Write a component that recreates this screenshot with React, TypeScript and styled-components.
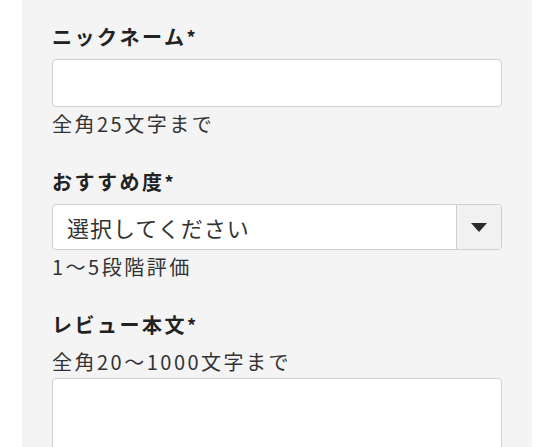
import * as React from 'react'
import styled, { createGlobalStyle } from 'styled-components'

const GlobalStyle = createGlobalStyle`
    html, body {
        margin: 0;
        padding: 0;
        background: #ffffff;
    }
    body {
        font-family: 'Noto Sans CJK JP', 'Noto Sans', sans-serif;
        color: #333333;
    }
`

const App = (): JSX.Element => {
    return (
        <>
            <GlobalStyle />
            <Page>
                <Panel>
                    <Field>
                        <Label>
                            ニックネーム<Required>*</Required>
                        </Label>
                        <TextInput type="text" />
                        <Note>全角25文字まで</Note>
                    </Field>
                    <Field>
                        <Label>
                            おすすめ度<Required>*</Required>
                        </Label>
                        <SelectBox>
                            <SelectValue>選択してください</SelectValue>
                            <SelectButton>
                                <Caret />
                            </SelectButton>
                        </SelectBox>
                        <Note>1〜5段階評価</Note>
                    </Field>
                    <Field>
                        <Label>
                            レビュー本文<Required>*</Required>
                        </Label>
                        <Note $above>全角20〜1000文字まで</Note>
                        <TextArea />
                    </Field>
                </Panel>
            </Page>
        </>
    )
}

const Page = styled.div`
    display: flex;
    padding-left: 22px;
    padding-right: 22px;
    height: 447px;
    overflow: hidden;
`
const Panel = styled.div`
    flex: 1;
    background-color: #f4f4f4;
    padding: 22px 30px 0;
    display: flex;
    flex-direction: column;
    gap: 28px;
`
const Field = styled.div`
    display: flex;
    flex-direction: column;
`
const Label = styled.div`
    font-size: 20px;
    font-weight: 700;
    line-height: 30px;
    letter-spacing: 2.5px;
    color: #222222;
    margin-bottom: 7px;
`
const Required = styled.span`
    font-size: 18px;
    line-height: 1;
`
const TextInput = styled.input`
    box-sizing: border-box;
    height: 48px;
    width: 100%;
    border: 1px solid #cfcfcf;
    border-radius: 4px;
    background: #ffffff;
    outline: none;
`
const Note = styled.div<{ $above?: boolean }>`
    font-size: 20px;
    line-height: 30px;
    letter-spacing: 2.5px;
    color: #333333;
    margin-top: ${(p) => (p.$above ? '0' : '2px')};
    margin-bottom: ${(p) => (p.$above ? '1px' : '0')};
`
const SelectBox = styled.div`
    box-sizing: border-box;
    height: 46px;
    display: flex;
    border: 1px solid #cfcfcf;
    border-radius: 4px;
    background: #ffffff;
    overflow: hidden;
`
const SelectValue = styled.div`
    flex: 1;
    display: flex;
    align-items: center;
    padding-left: 14px;
    font-size: 22px;
    letter-spacing: 1px;
    color: #333333;
`
const SelectButton = styled.div`
    width: 44px;
    display: flex;
    align-items: center;
    justify-content: center;
    border-left: 1px solid #cfcfcf;
    background: #f1f1f1;
`
const Caret = styled.span`
    width: 0;
    height: 0;
    border-left: 8.5px solid transparent;
    border-right: 8.5px solid transparent;
    border-top: 9px solid #2b2b2b;
`
const TextArea = styled.textarea`
    box-sizing: border-box;
    height: 160px;
    width: 100%;
    border: 1px solid #cfcfcf;
    border-radius: 4px;
    background: #ffffff;
    resize: none;
    outline: none;
`

export default App
